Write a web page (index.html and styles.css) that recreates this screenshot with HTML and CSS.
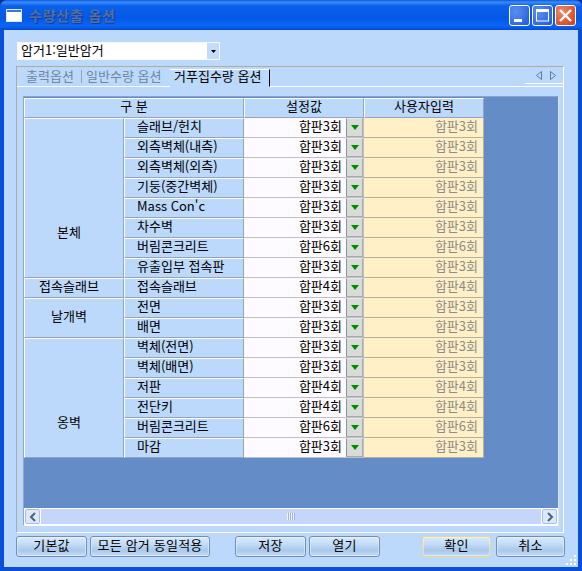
FILE: index.html
```html
<!DOCTYPE html>
<html lang="ko">
<head>
  <meta charset="UTF-8">
  <title>수량산출 옵션</title>
  <link rel="stylesheet" href="styles.css">
</head>
<body>

<div class="window">

  <!-- Title bar -->
  <div class="titlebar">
    <svg class="app-icon" width="16" height="13" viewBox="0 0 16 13">
      <rect x="0.5" y="0.5" width="15" height="12" fill="#fff" stroke="#dfe8f8"/>
      <rect x="1" y="1" width="14" height="2" fill="#3a78d8"/>
    </svg>
    <div class="title">수량산출 옵션</div>
    <div class="wbtn">
      <svg width="21" height="21" viewBox="0 0 21 21"><rect x="5" y="14" width="8" height="3" fill="#fff"/></svg>
    </div>
    <div class="wbtn">
      <svg width="21" height="21" viewBox="0 0 21 21"><rect x="4.5" y="5" width="12" height="11" fill="none" stroke="#fff"/><rect x="4" y="4" width="13" height="3" fill="#fff"/></svg>
    </div>
    <div class="wbtn wbtn-close">
      <svg width="21" height="21" viewBox="0 0 21 21"><path d="M5 5l11 11M16 5L5 16" stroke="#fff" stroke-width="2.4"/></svg>
    </div>
  </div>

  <div class="client">

    <div class="combo">
      <span class="combo-text">암거1:일반암거</span>
      <span class="combo-btn">
        <svg width="5" height="3" viewBox="0 0 5 3"><path d="M0 0h5L2.5 3z" fill="#000"/></svg>
      </span>
    </div>

    <div class="panel">
      <div class="tabs">
        <span class="tab tab-first">출력옵션</span>
        <span class="tab tab-second">일반수량 옵션</span>
        <span class="tab tab-active">거푸집수량 옵션</span>
        <span class="tab-arrows">
          <svg width="6" height="9" viewBox="0 0 6 9"><path d="M5.5 0.5v8L0.5 4.5z" fill="none" stroke="#5a7aa8"/></svg>
          <svg width="6" height="9" viewBox="0 0 6 9"><path d="M0.5 0.5v8L5.5 4.5z" fill="none" stroke="#5a7aa8"/></svg>
        </span>
      </div>

      <div class="grid-box">
        <div class="grid-area">
          <table class="grid">
            <colgroup>
              <col class="c1"><col class="c2"><col class="c3"><col class="c4"><col class="c5">
            </colgroup>
            <tr><th colspan="2">구 분</th><th colspan="2">설정값</th><th>사용자입력</th></tr>

            <tr><th rowspan="8" class="grp low-body">본체</th><th class="left">슬래브/헌치</th><td class="val">합판3회</td><td class="drop"><span class="drop-btn"><i></i></span></td><td class="user">합판3회</td></tr>
            <tr><th class="left">외측벽체(내측)</th><td class="val">합판3회</td><td class="drop"><span class="drop-btn"><i></i></span></td><td class="user">합판3회</td></tr>
            <tr><th class="left">외측벽체(외측)</th><td class="val">합판3회</td><td class="drop"><span class="drop-btn"><i></i></span></td><td class="user">합판3회</td></tr>
            <tr><th class="left">기둥(중간벽체)</th><td class="val">합판3회</td><td class="drop"><span class="drop-btn"><i></i></span></td><td class="user">합판3회</td></tr>
            <tr><th class="left">Mass Con'c</th><td class="val">합판3회</td><td class="drop"><span class="drop-btn"><i></i></span></td><td class="user">합판3회</td></tr>
            <tr><th class="left">차수벽</th><td class="val">합판3회</td><td class="drop"><span class="drop-btn"><i></i></span></td><td class="user">합판3회</td></tr>
            <tr><th class="left">버림콘크리트</th><td class="val">합판6회</td><td class="drop"><span class="drop-btn"><i></i></span></td><td class="user">합판6회</td></tr>
            <tr><th class="left">유출입부 접속판</th><td class="val">합판3회</td><td class="drop"><span class="drop-btn"><i></i></span></td><td class="user">합판3회</td></tr>

            <tr><th class="grp">접속슬래브</th><th class="left">접속슬래브</th><td class="val">합판4회</td><td class="drop"><span class="drop-btn"><i></i></span></td><td class="user">합판4회</td></tr>

            <tr><th rowspan="2" class="grp">날개벽</th><th class="left">전면</th><td class="val">합판3회</td><td class="drop"><span class="drop-btn"><i></i></span></td><td class="user">합판3회</td></tr>
            <tr><th class="left">배면</th><td class="val">합판3회</td><td class="drop"><span class="drop-btn"><i></i></span></td><td class="user">합판3회</td></tr>

            <tr><th rowspan="6" class="grp low-wall">옹벽</th><th class="left">벽체(전면)</th><td class="val">합판3회</td><td class="drop"><span class="drop-btn"><i></i></span></td><td class="user">합판3회</td></tr>
            <tr><th class="left">벽체(배면)</th><td class="val">합판3회</td><td class="drop"><span class="drop-btn"><i></i></span></td><td class="user">합판3회</td></tr>
            <tr><th class="left">저판</th><td class="val">합판4회</td><td class="drop"><span class="drop-btn"><i></i></span></td><td class="user">합판4회</td></tr>
            <tr><th class="left">전단키</th><td class="val">합판4회</td><td class="drop"><span class="drop-btn"><i></i></span></td><td class="user">합판4회</td></tr>
            <tr><th class="left">버림콘크리트</th><td class="val">합판6회</td><td class="drop"><span class="drop-btn"><i></i></span></td><td class="user">합판6회</td></tr>
            <tr><th class="left">마감</th><td class="val">합판3회</td><td class="drop"><span class="drop-btn"><i></i></span></td><td class="user">합판3회</td></tr>
          </table>
        </div>

        <div class="scrollbar">
          <span class="sb-btn">
            <svg width="8" height="10" viewBox="0 0 8 10"><path d="M6 1L2 5l4 4" fill="none" stroke="#4d6185" stroke-width="2"/></svg>
          </span>
          <span class="sb-thumb"><span class="grip"></span></span>
          <span class="sb-btn">
            <svg width="8" height="10" viewBox="0 0 8 10"><path d="M2 1l4 4-4 4" fill="none" stroke="#4d6185" stroke-width="2"/></svg>
          </span>
        </div>
      </div>
    </div>

    <div class="buttons">
      <button class="btn b-default">기본값</button>
      <button class="btn b-all">모든 암거 동일적용</button>
      <button class="btn b-save">저장</button>
      <button class="btn b-open">열기</button>
      <button class="btn b-ok">확인</button>
      <button class="btn b-cancel">취소</button>
    </div>

    <svg class="resize-grip" width="12" height="12" viewBox="0 0 12 12" fill="#fff">
      <rect x="9" y="0" width="2" height="2"/>
      <rect x="5" y="4" width="2" height="2"/><rect x="9" y="4" width="2" height="2"/>
      <rect x="1" y="8" width="2" height="2"/><rect x="5" y="8" width="2" height="2"/><rect x="9" y="8" width="2" height="2"/>
    </svg>
  </div>
</div>

</body>
</html>
```

FILE: styles.css
```css
html, body {
  margin: 0;
  height: 100%;
  background: #0a2a9a;
  overflow: hidden;
}

body, button, table {
  font-family: "Noto Sans CJK KR", "Liberation Sans", sans-serif;
  font-size: 13px;
  color: #000;
}

.window {
  width: 582px;
  height: 571px;
  display: flex;
  flex-direction: column;
  box-sizing: border-box;
  background: #0a4fd8;
  border-radius: 7px 7px 0 0;
}

/* Title bar */
.titlebar {
  height: 30px;
  flex: none;
  display: flex;
  align-items: center;
  padding: 0 6px 0 6px;
  border-radius: 7px 7px 0 0;
  background: linear-gradient(#0a55dc 0, #3a8cf8 2px, #0a60ec 6px, #0558e6 18px, #0a66f4 26px, #0348d2 30px);
}

.app-icon {
  flex: none;
  margin-right: 7px;
}

.title {
  flex: 1;
  font-size: 14px;
  font-weight: bold;
  letter-spacing: 0.8px;
  color: #53709c;
  text-shadow: 1px 1px 1px #0a3aa8;
}

.wbtn {
  width: 21px;
  height: 21px;
  margin-left: 2px;
  box-sizing: border-box;
  border: 1px solid #fff;
  border-radius: 3px;
  background: radial-gradient(circle at 30% 30%, #5a90f0, #2258d8);
}

.wbtn svg {
  display: block;
  margin: -1px;
}

.wbtn-close {
  background: radial-gradient(circle at 30% 30%, #ee8a68, #cf3a12);
}

/* Dialog body */
.client {
  position: relative;
  flex: 1;
  margin: 0 4px 4px;
  background: #bcd9fc;
  display: flex;
  flex-direction: column;
  padding-top: 12px;
}

.combo {
  width: 203px;
  height: 18px;
  margin-left: 13px;
  background: #fff;
  display: flex;
  box-sizing: border-box;
  border: 1px solid #f4f8ff;
}

.combo-text {
  flex: 1;
  line-height: 14px;
  padding-left: 3px;
}

.combo-btn {
  width: 12px;
  background: #c4dbfa;
  display: flex;
  align-items: center;
  justify-content: center;
}

/* Tab panel */
.panel {
  width: 548px;
  height: 467px;
  margin: 6px 0 0 12px;
  box-sizing: border-box;
  border-top: 1px solid #aeaca0;
  border-left: 1px solid #aeaca0;
  border-right: 1px solid #fff;
  border-bottom: 1px solid #fff;
  display: flex;
  flex-direction: column;
}

.tabs {
  height: 20px;
  flex: none;
  display: flex;
  position: relative;
  box-sizing: border-box;
  border-bottom: 1px solid #fff;
}

.tab {
  line-height: 17px;
  color: #6d87a3;
  white-space: nowrap;
}

.tab-first {
  width: 64px;
  padding-left: 9px;
  box-sizing: border-box;
}

.tab-second {
  width: 89px;
  padding-left: 5px;
  box-sizing: border-box;
  position: relative;
}

.tab-second::before {
  content: "";
  position: absolute;
  left: 0;
  top: 3px;
  height: 13px;
  border-left: 1px solid #8ea4bb;
}

.tab-active {
  width: 100px;
  height: 18px;
  margin-top: 2px;
  margin-bottom: -1px;
  padding-left: 4px;
  box-sizing: border-box;
  color: #000;
  line-height: 12px;
  background: #bcd9fc;
  border-top: 1px solid #fff;
  border-right: 1px solid #000;
  border-bottom: 1px solid #bcd9fc;
}

.tab-arrows {
  margin-left: auto;
  width: 38px;
  height: 17px;
  box-sizing: border-box;
  border-bottom: 1px solid #fff;
  display: flex;
  gap: 8px;
  justify-content: center;
  align-items: center;
  padding-left: 4px;
}

/* Grid */
.grid-box {
  margin: 9px 4px 6px 6px;
  flex: 1;
  display: flex;
  flex-direction: column;
  border-top: 1px solid #8fa3c4;
  border-left: 1px solid #9aa6b8;
  border-right: 1px solid #d9e6f8;
  border-bottom: 1px solid #fff;
}

.grid-area {
  flex: 1;
  background: #648dc8;
  border-top: 1px solid #648dc8;
  overflow: hidden;
}

.grid {
  border-collapse: separate;
  border-spacing: 0;
  table-layout: fixed;
  width: 460px;
}

.c1 { width: 100px; }
.c2 { width: 120px; }
.c3 { width: 102px; }
.c4 { width: 18px; }
.c5 { width: 120px; }

.grid th,
.grid td {
  height: 20px;
  padding: 0 0 4px;
  box-sizing: border-box;
  font-weight: normal;
  white-space: nowrap;
  line-height: 14px;
  border-bottom: 1px solid #93a3c2;
}

.grid td {
  padding-top: 1px;
}

.grid th {
  background: #bcd9fc;
  text-align: center;
  border-top: 1px solid #fff;
  border-left: 1px solid #fff;
  border-right: 1px solid #93a3c2;
}

/* the group labels sit left of and below the middle of their cells */
.grid th.grp { padding-right: 10px; }
.grid th.low-body { padding-top: 72px; }
.grid th.low-wall { padding-top: 52px; }

.grid th.left {
  text-align: left;
  padding-left: 12px;
}

.grid td.val {
  background: #fdfbff;
  text-align: right;
  padding-right: 4px;
  border-bottom-color: #c0c0c8;
}

.grid td.drop {
  background: #fdfbff;
  vertical-align: top;
  padding: 0;
  border-bottom-color: #c0c0c8;
  border-right: 1px solid #c0c0c8;
}

.drop-btn {
  display: flex;
  align-items: center;
  justify-content: center;
  width: 17px;
  height: 19px;
  box-sizing: border-box;
  background: #d8dcd8;
  border: 1px solid #a8aaa8;
  border-top-color: #e8e8e8;
  border-left-color: #8f918f;
}

.drop-btn i {
  width: 0;
  height: 0;
  border-left: 4px solid transparent;
  border-right: 4px solid transparent;
  border-top: 5px solid #008a00;
}

.grid td.user {
  background: #fff0c8;
  color: #8e8c86;
  text-align: right;
  padding-right: 5px;
  border-right: 1px solid #b4b09c;
  border-bottom-color: #b4b09c;
}

/* Scroll bar */
.scrollbar {
  height: 17px;
  flex: none;
  display: flex;
  background: #fff;
  padding: 1px;
  box-sizing: border-box;
  gap: 1px;
}

.sb-btn {
  width: 15px;
  flex: none;
  display: flex;
  align-items: center;
  justify-content: center;
  box-sizing: border-box;
  border: 1px solid #a9bee2;
  border-radius: 2px;
  background: #dce8fd;
}

.sb-thumb {
  flex: 1;
  display: flex;
  align-items: center;
  justify-content: center;
  background: #c6d6fb;
}

.grip {
  width: 8px;
  height: 7px;
  background: repeating-linear-gradient(90deg, #eef3ff 0 1px, #9fb4e2 1px 2px);
}

/* Bottom buttons */
.buttons {
  display: flex;
  margin: 3px 0 0 12px;
}

.btn {
  height: 21px;
  padding: 0 0 3px;
  box-sizing: border-box;
  border: 1px solid #6f8fb8;
  border-radius: 3px;
  line-height: 14px;
  letter-spacing: 0.2px;
  background: linear-gradient(#d9e9fd 0, #c8dffa 30%, #a9c8ea 70%, #c5dcf8 100%);
  box-shadow: inset 0 0 0 1px rgba(255, 255, 255, 0.4);
}

.b-default { width: 71px; }
.b-all { width: 120px; margin-left: 3px; }
.b-save { width: 71px; margin-left: 25px; }
.b-open { width: 71px; margin-left: 3px; }
.b-ok { width: 69px; margin-left: 42px; border-color: #e8d890; }
.b-cancel { width: 69px; margin-left: 5px; }

.resize-grip {
  position: absolute;
  right: 1px;
  bottom: 0;
}
```
